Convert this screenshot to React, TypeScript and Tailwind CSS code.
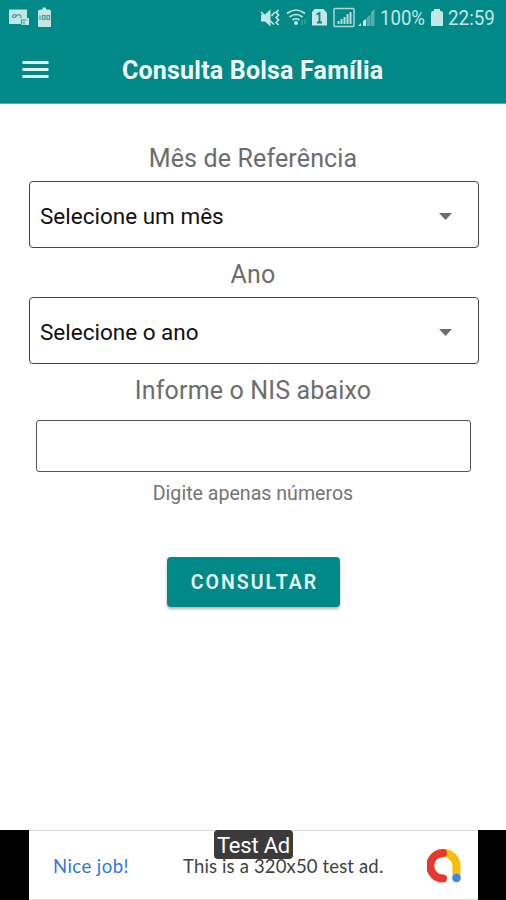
import type { ReactNode } from "react";

function StatusIcons() {
  return (
    <svg className="h-[36px] w-[376px] shrink-0" viewBox="0 0 376 36" fill="none">
      <g fill="#c4e6e4">
        <path d="M9 9.500h18v8.500h2v7h-8v-1H9z" />
        <path d="M41 9.500h1.500v-2H46v2h3q2 0 2 2V27H38V11.500q0-2 3-2z" />
        <path d="M261 14.500h4l5.500-5v17l-5.500-5h-4z" />
        <path d="M314.500 9h9l3.500 4v12.500h-15V12z" />
      </g>
      <g stroke="#3a9f9a" strokeWidth="1.200">
        <path d="M17 15.200q-4-1.500-4.500 1.300 1 2.500 3.500 0 2.500-3 4.500-1 1.500 2-1 2M21.500 24.500v-4.500h5M24 21.500v3" />
        <path d="M40 15.500v4.500M42.500 15.500h2.500v4H42.500zM47 15.500h2.500v4H47z" />
      </g>
      <path d="M316.500 14.500l3-1.500v9.500M317 22.500h5" stroke="#008986" strokeWidth="1.800" />
      <g stroke="#c4e6e4" strokeWidth="1.700">
        <path d="M261 12l13 12.500M271.500 16l3.500-4M278.500 10l-2.300 2.500 2.300 2.500-2.300 2.500 2.300 2.500-2.300 2.500 2.300 2.500" />
        <path d="M287 13.500q9-7 18 0M289.500 17q6.500-5 13 0M292.500 20q3.500-2.500 7 0" />
      </g>
      <circle cx="296" cy="23" r="2" fill="#c4e6e4" />
      <path d="M302 20v5M305 19v5" stroke="#369f9b" strokeWidth="1.500" />
      <rect x="334" y="8.500" width="20" height="18" rx="1" stroke="#a9d8d5" strokeWidth="1.500" />
      <path d="M338.500 24v-3M341.500 24v-5M344.500 24v-7M347.500 24v-10M350.500 24V12" stroke="#b8dfdc" strokeWidth="2" />
      <path d="M358 26l3-3v3z M363 26v-5l3-2v7z" fill="#c4e6e4" />
      <path d="M366.500 26v-8l4-3.500v11.500z M371 26V12l3.500-3v17z" fill="#58aeaa" />
    </svg>
  );
}

function StatusBar() {
  return (
    <div className="flex h-[36px] items-center text-[#c4e6e4]">
      <StatusIcons />
      <span className="ml-[4px] w-[47px] origin-left scale-x-[0.93] whitespace-nowrap text-[20px] leading-[36px]">100%</span>
      <svg className="ml-[4px] h-[36px] w-[12px] shrink-0" viewBox="0 0 12 36" fill="currentColor">
        <path d="M3 11V9h6v2h1q2 0 2 2v13H0V13q0-2 2-2z" />
      </svg>
      <span className="ml-[5px] w-[50px] origin-left scale-x-[0.94] whitespace-nowrap text-[20px] leading-[36px]">22:59</span>
    </div>
  );
}

function Label({ children }: { children: ReactNode }) {
  return <div className="h-[49px] text-center text-[25px] leading-[54px] tracking-[0.15px] text-[#6c6c6c]">{children}</div>;
}

function SelectBox({ children }: { children: ReactNode }) {
  return (
    <button className="ml-[29px] flex h-[67px] w-[450px] items-center justify-between rounded-[4px] border-[1.5px] border-[#444] pt-[3px] pr-[26px] pl-[10px] text-left text-[22.500px] text-[#111]">
      <span className="pt-[2px] whitespace-nowrap">{children}</span>
      <svg className="h-[7px] w-[13px]" viewBox="0 0 13 7" fill="#6c6c6c">
        <path d="M0 0h13L6.500 7z" />
      </svg>
    </button>
  );
}

function AdBanner() {
  return (
    <div className="flex h-[70px] w-full bg-black font-['Lato','Liberation_Sans',sans-serif]">
      <div className="relative ml-[29px] flex h-[70px] w-[449px] items-center border-y border-[#d5dada] bg-white text-[18.500px]">
        <span className="ml-[24px] w-[130px] pt-[4px] tracking-[0.45px] whitespace-nowrap text-[#2d78df]">Nice job!</span>
        <span className="w-[244px] pt-[4px] tracking-[0.15px] whitespace-nowrap text-[#3f3f3f]">This is a 320x50 test ad.</span>
        <svg className="mt-[2px] h-[36px] w-[36px]" viewBox="0 0 36 36" fill="none" strokeWidth="8" strokeLinecap="round">
          <path d="M16 5h.5a13 13 0 0 1 13 13v11" stroke="#fbbc05" strokeLinecap="butt" />
          <path d="M16 5a12.800 12.800 0 0 0 0 25.600" stroke="#e8382d" />
          <circle cx="29.500" cy="30" r="4.300" fill="#4285e8" />
        </svg>
        <div className="absolute top-[-1px] left-[185px] h-[29px] w-[79px] rounded-[4px] bg-[#3b3b3b] text-center font-['Roboto',sans-serif] text-[22px] leading-[31px] tracking-[-0.2px] whitespace-nowrap text-white">Test Ad</div>
      </div>
    </div>
  );
}

export default function App() {
  return (
    <div className="flex h-[900px] w-[506px] flex-col overflow-hidden bg-white font-['Roboto','Liberation_Sans',sans-serif]">
      <header className="h-[104px] shrink-0 border-b border-[#74a5a4] bg-[#008986]">
        <StatusBar />
        <div className="flex h-[67px] items-center">
          <svg className="ml-[22px] h-[20px] w-[27px]" viewBox="0 0 27 20" stroke="#e1f6f4" strokeWidth="3">
            <path d="M.5 2.500h26M.5 9.500h26M.5 16.500h26" />
          </svg>
          <h1 className="ml-[73px] pt-[2px] text-[25px] leading-[68px] font-bold tracking-[0.2px] whitespace-nowrap text-[#effbfa]">Consulta Bolsa Família</h1>
        </div>
      </header>
      <main className="flex flex-1 flex-col pt-[28px]">
        <Label>Mês de Referência</Label>
        <SelectBox>Selecione um mês</SelectBox>
        <Label>Ano</Label>
        <SelectBox>Selecione o ano</SelectBox>
        <Label>Informe o NIS abaixo</Label>
        <input className="mt-[7px] ml-[36px] h-[52px] w-[435px] rounded-[3px] border-[1.5px] border-[#555]" />
        <p className="mt-[6px] text-center text-[19.600px] leading-[32px] text-[#747474]">Digite apenas números</p>
        <button className="mt-[47px] ml-[167px] h-[50px] w-[173px] rounded-[4px] bg-[#008986] pl-[2px] text-[19.500px] leading-[52px] font-semibold tracking-[2px] text-[#e5f7f5] shadow-[0_2px_3px_rgba(0,0,0,0.3)]">CONSULTAR</button>
      </main>
      <AdBanner />
    </div>
  );
}
